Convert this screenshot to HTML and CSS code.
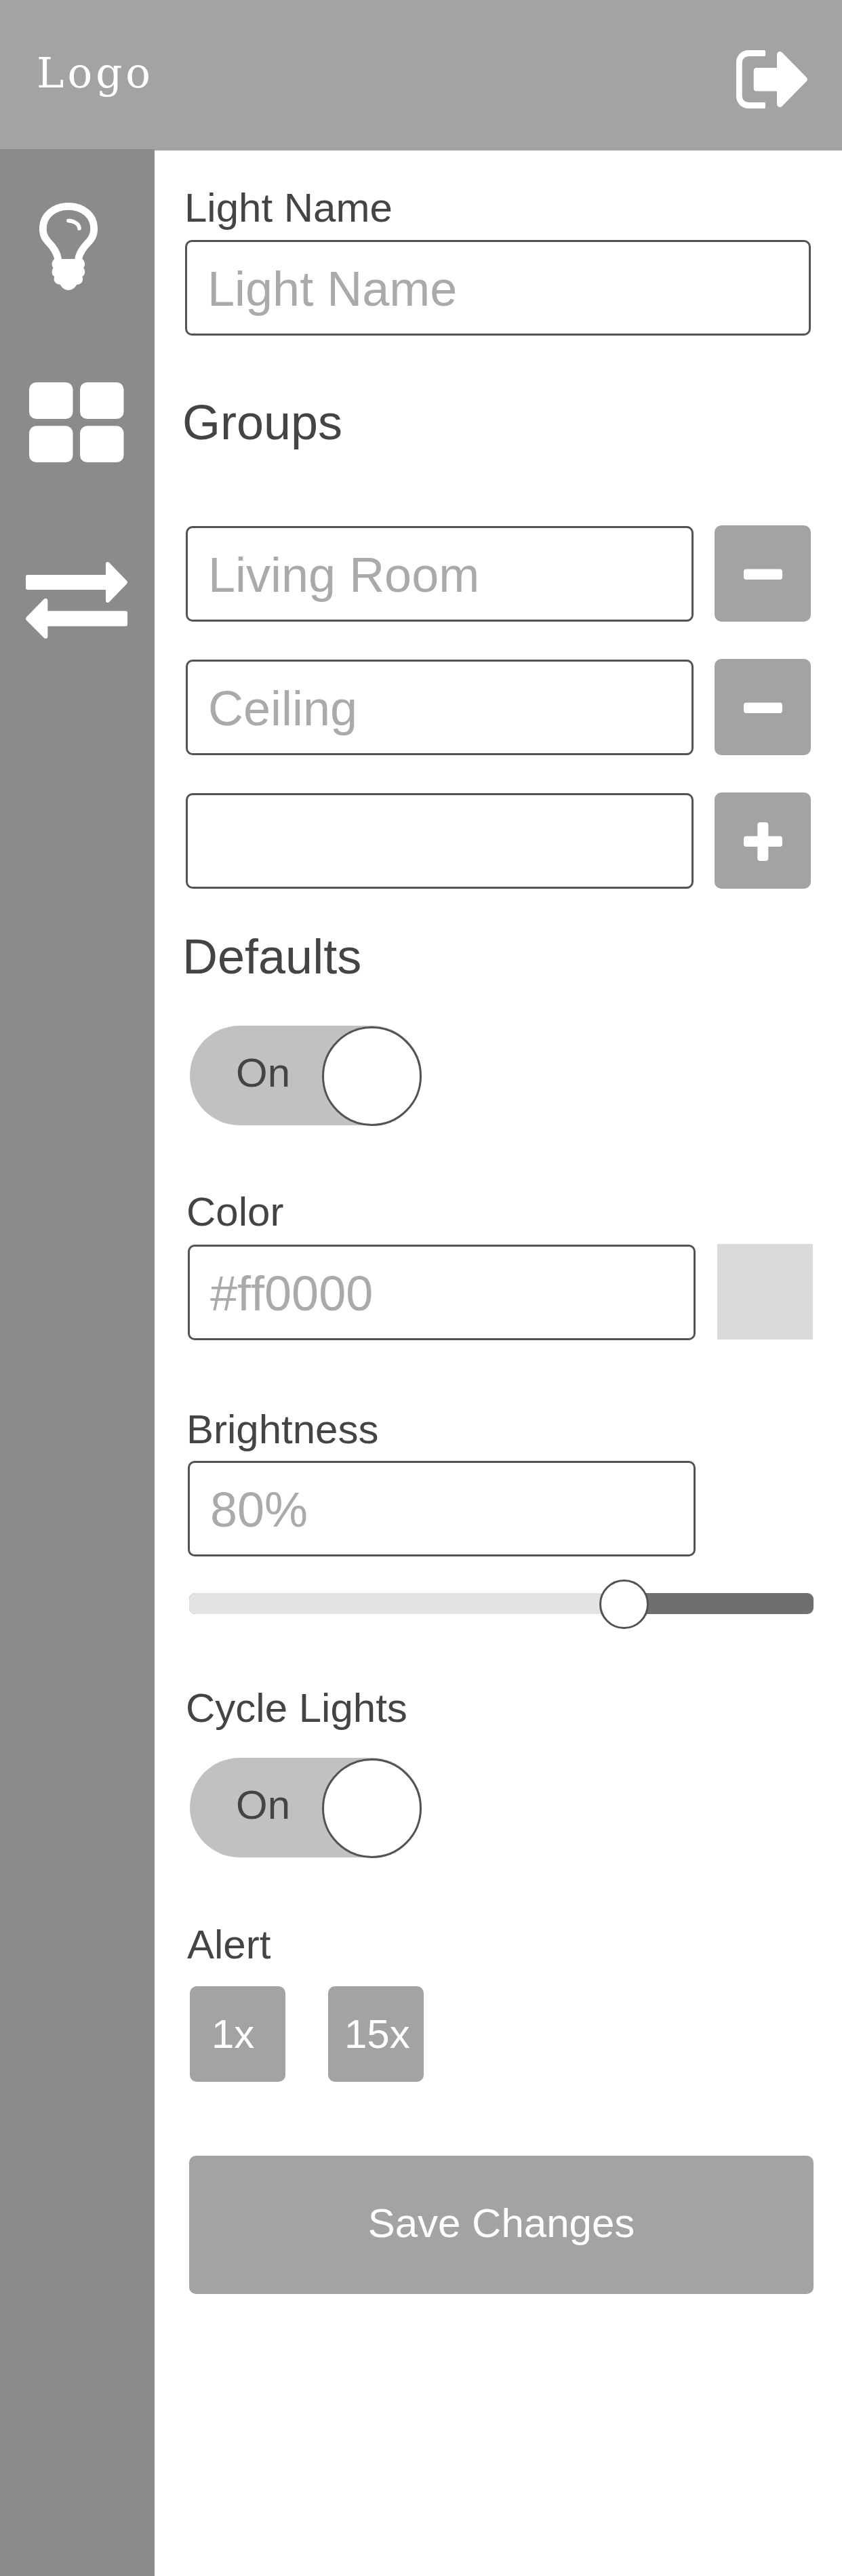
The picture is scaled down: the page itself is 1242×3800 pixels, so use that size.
FILE: index.html
```html
<!DOCTYPE html>
<html lang="en">
<head>
<meta charset="utf-8">
<title>Light Settings</title>
<link rel="stylesheet" href="styles.css">
</head>
<body>
<header class="header">
  <div class="logo">Logo</div>
  <svg class="logout" viewBox="0 0 105 86" width="105" height="86" fill="#fff">
    <path d="M18 0H41.500Q43 0 43 1.500V7.500Q43 9 41.500 9H19Q8.700 9 8.700 19.500V66.500Q8.700 77 19 77H41.500Q43 77 43 78.500V84.500Q43 86 41.500 86H18C8 86 0 78 0 68V18C0 8 8 0 18 0Z"/>
    <path d="M30 26H60V6.500C60 2.500 64.500 .5 67.500 3.300L104 40.500Q106 43 104 45.500L67.500 82.700C64.500 85.500 60 83.500 60 79.500V60.500H30Q25.700 60.500 25.700 56V30.500Q25.700 26 30 26Z"/>
  </svg>
</header>
<div class="layout">
  <nav class="sidebar">
    <svg class="icon-bulb" viewBox="0 0 258 387" width="86" height="129">
      <path d="M83 252C81 228 62 196 37 171C24 157 16 139 16 115C16 56 66 16 129 16S242 56 242 115C242 139 234 157 221 171C196 196 175 228 173 252" fill="none" stroke="#fff" stroke-width="32.500"/>
      <path d="M129 80C154 81 176 94 177 114" fill="none" stroke="#fff" stroke-width="17" stroke-linecap="round"/>
      <path d="M67 249H190C204 260 204 279 195 289C205 299 204 320 190 327C198 346 186 362 166 362C148 395 109 395 92 362C72 362 60 346 67 327C53 320 53 299 62 289C53 279 53 260 67 249Z" fill="#fff"/>
    </svg>
    <svg class="icon-grid" viewBox="0 0 140 118" width="140" height="118" fill="#fff">
      <rect width="64.500" height="54" rx="10.500"/>
      <rect x="75" width="64.500" height="54" rx="10.500"/>
      <rect y="64.300" width="64.500" height="53.700" rx="10.500"/>
      <rect x="75" y="64.300" width="64.500" height="53.700" rx="10.500"/>
    </svg>
    <svg class="icon-swap" viewBox="0 0 450 339" width="150" height="113" fill="#fff">
      <path d="M8 57H354V9Q354 0 362 0Q366 0 370 4L447 83Q453 90 447 97L370 176Q366 180 362 180Q354 179 354 171V123H8Q0 123 0 115V65Q0 57 8 57Z"/>
      <path d="M442 217H97V171Q97 162 89 161Q84 161 80 165L3 244Q-3 251 3 258L80 335Q84 339 89 339Q97 338 97 330V284H442Q450 284 450 276V225Q450 217 442 217Z"/>
    </svg>
  </nav>
  <main class="content">
    <div class="label label-name">Light Name</div>
    <div class="field field-name">Light Name</div>

    <h2 class="heading heading-groups">Groups</h2>
    <div class="groups">
      <div class="row">
        <div class="field">Living Room</div>
        <div class="square"><svg viewBox="0 0 57 57" width="57" height="57"><rect y="20.500" width="57" height="15.500" rx="4" fill="#fff"/></svg></div>
      </div>
      <div class="row">
        <div class="field">Ceiling</div>
        <div class="square"><svg viewBox="0 0 57 57" width="57" height="57"><rect y="20.500" width="57" height="15.500" rx="4" fill="#fff"/></svg></div>
      </div>
      <div class="row">
        <div class="field"></div>
        <div class="square"><svg viewBox="0 0 57 57" width="57" height="57" fill="#fff"><rect y="20.500" width="57" height="15.500" rx="4"/><rect x="20.300" width="16" height="57" rx="4"/></svg></div>
      </div>
    </div>

    <h2 class="heading heading-defaults">Defaults</h2>
    <div class="toggle toggle-power"><span class="toggle-text">On</span><span class="knob"></span></div>

    <div class="label label-color">Color</div>
    <div class="row row-color">
      <div class="field">#ff0000</div>
      <div class="swatch"></div>
    </div>

    <div class="label label-brightness">Brightness</div>
    <div class="field field-brightness">80%</div>
    <div class="slider">
      <div class="track"><div class="track-fill"></div></div>
      <div class="thumb"></div>
    </div>

    <div class="label label-cycle">Cycle Lights</div>
    <div class="toggle toggle-cycle"><span class="toggle-text">On</span><span class="knob"></span></div>

    <div class="label label-alert">Alert</div>
    <div class="alerts">
      <div class="alert-button alert-once">1x</div>
      <div class="alert-button alert-many">15x</div>
    </div>

    <div class="save">Save Changes</div>
  </main>
</div>
</body>
</html>
```

FILE: styles.css
```css
* { box-sizing: border-box; }

body {
  margin: 0;
  background: #fff;
  color: #444;
  font-family: "Liberation Sans", Arial, sans-serif;
  font-size: 60px;
  line-height: 60px;
  font-kerning: none;
}

svg { display: block; }

.header {
  display: flex;
  justify-content: space-between;
  align-items: flex-start;
  height: 222px;
  padding: 74px 51px 0 54px;
  background: #a3a3a3;
}

.logo {
  padding-top: 4px;
  color: #fff;
  font-family: "DejaVu Serif", serif;
  font-size: 61px;
  letter-spacing: 5px;
}

.layout { display: flex; }

.sidebar {
  width: 228px;
  height: 3580px;
  margin-top: -2px;
  background: #8b8b8b;
}
.icon-bulb { margin: 79px 0 0 58px; }
.icon-grid { margin: 136px 0 0 43px; }
.icon-swap { margin: 147px 0 0 38px; }

.content {
  flex: 1;
  padding: 55px 42px 0 46px;
}

.heading {
  margin: 0 0 0 -5px;
  font-size: 72px;
  line-height: 72px;
  font-weight: 400;
}
.heading-groups { margin-top: 92px; }
.heading-defaults { margin-top: 64px; }

.label-name { margin-left: -2px; }
.label-color { margin: 98px 0 0 1px; }
.label-brightness { margin: 102px 0 0 1px; }
.label-cycle { margin-top: 87px; }
.label-alert { margin: 99px 0 0 2px; }

.field {
  width: 749px;
  height: 141px;
  padding: 3px 0 0 30px;
  border: 3px solid #535353;
  border-radius: 10px;
  color: #aaa;
  font-size: 72px;
  line-height: 132px;
}
.field-name {
  width: 923px;
  margin: 17px 0 0 -1px;
}
.field-brightness { margin: 16px 0 0 3px; }

.groups {
  display: flex;
  flex-direction: column;
  gap: 55px;
  margin-top: 116px;
}
.row {
  display: flex;
  align-items: flex-end;
  gap: 31px;
  height: 142px;
}
.row-color {
  gap: 32px;
  margin: 17px 0 0 3px;
}
.square {
  width: 142px;
  height: 142px;
  padding: 44px 0 0 43px;
  border-radius: 10px;
  background: #a3a3a3;
}
.swatch {
  align-self: flex-start;
  width: 141px;
  height: 141px;
  background: #dadada;
}

.toggle {
  display: flex;
  justify-content: space-between;
  width: 342px;
  height: 147px;
  margin-left: 6px;
  padding: 40px 0 0 68px;
  border-radius: 74px;
  background: #c1c1c1;
}
.toggle-power { margin-top: 66px; }
.toggle-cycle { margin-top: 43px; }
.knob {
  width: 147px;
  height: 147px;
  margin-top: -39px;
  border: 3px solid #535353;
  border-radius: 50%;
  background: #fff;
}

/* one grid cell holds both the track and the thumb */
.slider {
  display: grid;
  align-items: center;
  width: 921px;
  height: 73px;
  margin: 34px 0 0 5px;
}
.track, .thumb { grid-area: 1 / 1; }
.track {
  height: 31px;
  margin-bottom: 2px;
  border-radius: 9px;
  background: #6f6f6f;
  overflow: hidden;
}
.track-fill {
  width: 640px;
  height: 31px;
  background: #e3e3e3;
}
.thumb {
  width: 73px;
  height: 73px;
  margin-left: 605px;
  border: 3px solid #535353;
  border-radius: 50%;
  background: #fff;
}

.alerts {
  display: flex;
  gap: 63px;
  margin: 31px 0 0 6px;
}
.alert-button {
  width: 141px;
  height: 141px;
  border-radius: 10px;
  background: #a3a3a3;
  color: #fff;
  line-height: 141px;
}
.alert-once { padding-left: 32px; }
.alert-many { padding-left: 24px; }

.save {
  width: 921px;
  height: 204px;
  margin: 109px 0 0 5px;
  border-radius: 10px;
  background: #a3a3a3;
  color: #fff;
  line-height: 199px;
  text-align: center;
}
```
